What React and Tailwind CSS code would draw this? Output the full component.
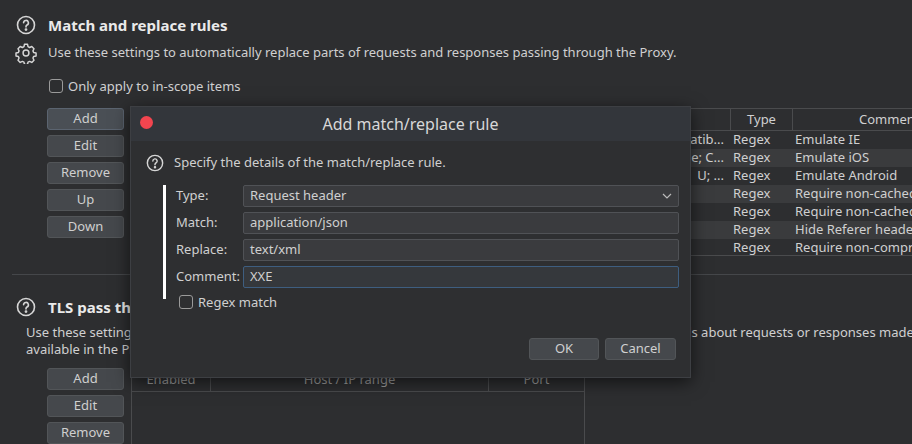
import React from "react";

const Help = ({ s = 20 }) => (
  <svg width={s} height={s} viewBox="0 0 20 20" fill="none" stroke="#d6d6d6" strokeWidth="1.6">
    <circle cx="10" cy="10" r="8.5" />
    <path d="M7.6 7.8a2.4 2.4 0 1 1 3.4 2.2c-.7.4-1 .8-1 1.6v.4" strokeLinecap="round" />
    <circle cx="10" cy="14.6" r="0.6" fill="#d6d6d6" />
  </svg>
);
const Gear = () => (
  <svg width="22" height="22" viewBox="0 0 24 24" fill="none" stroke="#d6d6d6" strokeWidth="1.6" strokeLinejoin="round">
    <path d="M10.3 2.5h3.4l.5 2.6 1.7.9 2.4-1.1 2.4 2.4-1.1 2.4.7 1.7 2.7.5v3.4l-2.7.5-.7 1.7 1.1 2.4-2.4 2.4-2.4-1.1-1.7.7-.5 2.7h-3.4l-.5-2.7-1.7-.7-2.4 1.1-2.4-2.4 1.1-2.4-.7-1.700-2.6-.5v-3.4l2.6-.5.7-1.7-1.1-2.4 2.4-2.4 2.4 1.1 1.7-.9z" />
    <circle cx="12" cy="12" r="3.2" />
  </svg>
);
const Btn = ({ children, active }) => (
  <div className={`w-[77px] h-[22px] flex items-center justify-center rounded-[3px] text-[13px] text-[#cfcfcf] ${active ? "bg-[#4a4f55] border border-[#5b6470]" : "bg-[#45484c] border border-[#525558]"}`}>{children}</div>
);
const Check = () => <div className="w-[14px] h-[14px] rounded-[3px] border border-[#9a9a9a]" />;

const rows = [
  ["atib...", "Emulate IE"],
  ["e; C...", "Emulate iOS"],
  ["U; ...", "Emulate Android"],
  ["", "Require non-cached"],
  ["", "Require non-cached"],
  ["", "Hide Referer header"],
  ["", "Require non-compre"],
];

export default function App() {
  return (
    <div className="relative w-[912px] h-[444px] overflow-hidden bg-[#2d2e30] text-[#d0d0d0]" style={{ fontFamily: '"Noto Sans", sans-serif' }}>
      <div className="flex flex-col">
        <div className="flex items-center gap-[12px] pl-[16px] pt-[14px]">
          <Help s={20} />
          <span className="text-[15px] font-bold text-[#eaeaea]">Match and replace rules</span>
        </div>
        <div className="flex items-center gap-[11px] pl-[15px] mt-[5px]">
          <Gear />
          <span className="text-[13px]">Use these settings to automatically replace parts of requests and responses passing through the Proxy.</span>
        </div>
        <div className="flex items-center gap-[5px] pl-[49px] mt-[13px]">
          <Check />
          <span className="text-[13px]">Only apply to in-scope items</span>
        </div>
        <div className="flex gap-[6px] pl-[47px] mt-[12px]">
          <div className="flex flex-col gap-[5px]">
            <Btn active>Add</Btn><Btn>Edit</Btn><Btn>Remove</Btn><Btn>Up</Btn><Btn>Down</Btn>
          </div>
          <div className="flex-1 h-[148px] bg-[#2d2e30] border border-[#4a4b4d] border-r-0 text-[13px] overflow-hidden">
            <div className="flex h-[22px] border-b border-[#4a4b4d] items-center">
              <div className="flex-1" />
              <div className="w-[62px] h-full border-l border-[#4a4b4d] flex items-center justify-center">Type</div>
              <div className="w-[120px] h-full border-l border-[#4a4b4d] flex items-center pl-[66px] whitespace-nowrap overflow-hidden">Comment</div>
            </div>
            {rows.map((r, i) => (
              <div key={i} className={`flex h-[18px] items-center whitespace-nowrap ${i % 2 ? "bg-[#3a3b3d]" : ""}`}>
                <div className="flex-1 text-right pr-[6px]">{r[0]}</div>
                <div className="w-[62px] pl-[3px]">Regex</div>
                <div className="w-[120px] pl-[3px] overflow-hidden">{r[1]}</div>
              </div>
            ))}
          </div>
        </div>
        <div className="ml-[12px] mt-[18px] h-px bg-[#45474a]" />
        <div className="flex items-center gap-[12px] pl-[16px] mt-[21px]">
          <Help s={20} />
          <span className="text-[15px] font-bold text-[#eaeaea]">TLS pass through</span>
        </div>
        <div className="flex gap-[11px] pl-[15px] mt-[5px]">
          <Gear />
          <span className="text-[13px] leading-[17px] whitespace-nowrap">Use these settings to specify destinations for which Burp will directly pass through TLS connections. No details about requests or responses made via<br />available in the Proxy intercept view or history.</span>
        </div>
        <div className="flex gap-[7px] pl-[47px] mt-[10px]">
          <div className="flex flex-col gap-[5px]"><Btn>Add</Btn><Btn>Edit</Btn><Btn>Remove</Btn></div>
          <div className="w-[454px] h-[90px] border border-[#4a4b4d] text-[13px] text-[#9a9a9a]">
            <div className="flex h-[22px] border-b border-[#4a4b4d] items-center mt-[1px]">
              <div className="w-[78px] text-center">Enabled</div>
              <div className="flex-1 h-full border-l border-[#4a4b4d] flex items-center justify-center">Host / IP range</div>
              <div className="w-[96px] h-full border-l border-[#4a4b4d] flex items-center justify-center">Port</div>
            </div>
          </div>
        </div>
      </div>

      <div className="absolute left-[130px] top-[106px] w-[561px] h-[272px] bg-[#2e2f31] border border-[#3d3f43] shadow-[0_4px_16px_rgba(0,0,0,0.6)] flex flex-col">
        <div className="h-[34px] bg-[#33363b] flex items-center relative">
          <div className="absolute left-[9px] top-[9px] w-[13px] h-[13px] rounded-full bg-[#f2454f]" />
          <div className="flex-1 text-center text-[16px] text-[#d8d8d8]">Add match/replace rule</div>
        </div>
        <div className="flex items-center gap-[10px] pl-[15px] mt-[12px]">
          <Help s={18} />
          <span className="text-[13px]">Specify the details of the match/replace rule.</span>
        </div>
        <div className="flex mt-[12px] pl-[32px]">
          <div className="w-[3px] h-[114px] bg-white" />
          <div className="flex flex-col gap-[5px] pl-[10px] text-[13px] w-[513px]">
            {[["Type:", "Request header", "sel"], ["Match:", "application/json"], ["Replace:", "text/xml"], ["Comment:", "XXE", "focus"]].map(([l, v, k]) => (
              <div key={l} className="flex items-center">
                <div className="w-[67px]">{l}</div>
                <div className={`flex-1 h-[22px] flex items-center px-[6px] rounded-[2px] ${k === "focus" ? "bg-[#35383c] border border-[#3e5e80]" : "bg-[#3a3b3e] border border-[#505256]"}`}>
                  <span className="flex-1">{v}</span>
                  {k === "sel" && (
                    <svg width="10" height="6" viewBox="0 0 10 6" fill="none" stroke="#bbb" strokeWidth="1.2"><path d="M1 1l4 4 4-4" /></svg>
                  )}
                </div>
              </div>
            ))}
          </div>
        </div>
        <div className="flex items-center gap-[5px] pl-[48px] -mt-[6px] text-[13px]">
          <Check /><span>Regex match</span>
        </div>
        <div className="flex justify-end gap-[6px] pr-[14px] mt-[26px] text-[13px]">
          <div className="w-[70px] h-[22px] flex items-center justify-center rounded-[3px] bg-[#45484c] border border-[#525558]">OK</div>
          <div className="w-[71px] h-[22px] flex items-center justify-center rounded-[3px] bg-[#45484c] border border-[#525558]">Cancel</div>
        </div>
      </div>
    </div>
  );
}
